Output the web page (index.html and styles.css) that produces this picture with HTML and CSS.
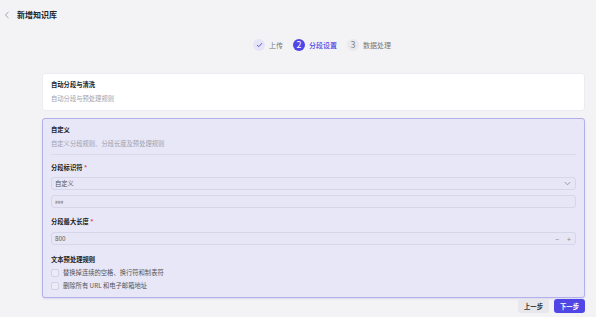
FILE: index.html
```html
<!DOCTYPE html>
<html lang="zh">
<head>
    <meta charset="UTF-8">
    <meta name="viewport" content="width=device-width, initial-scale=1.0">
    <title>新增知识库</title>
    <link rel="stylesheet" href="styles.css">
</head>
<body>
    <div class="header">
        <svg class="back" width="6" height="8" viewBox="0 0 6 8"><path d="M4.5 0.8 L1.5 4 L4.5 7.2" fill="none" stroke="#9a9aa6" stroke-width="0.9"/></svg>
        <span class="title">新增知识库</span>
    </div>

    <div class="steps">
        <div class="step done">
            <span class="dot"><svg width="7" height="6" viewBox="0 0 7 6"><path d="M1 3 L2.8 4.7 L6 1.2" fill="none" stroke="#5b55e0" stroke-width="1"/></svg></span>
            <span class="label">上传</span>
        </div>
        <div class="step active">
            <span class="dot">2</span>
            <span class="label">分段设置</span>
        </div>
        <div class="step">
            <span class="dot">3</span>
            <span class="label">数据处理</span>
        </div>
    </div>

    <div class="main">
        <div class="card">
            <div class="card-title">自动分段与清洗</div>
            <div class="card-desc">自动分段与预处理规则</div>
        </div>

        <div class="card selected">
            <div class="card-title">自定义</div>
            <div class="card-desc">自定义分段规则、分段长度及预处理规则</div>
            <hr class="divider">

            <div class="field-label">分段标识符 <span class="req">*</span></div>
            <div class="box">
                <span>自定义</span>
                <svg width="7" height="5" viewBox="0 0 7 5"><path d="M0.8 1 L3.5 3.8 L6.2 1" fill="none" stroke="#8a8a9a" stroke-width="0.8"/></svg>
            </div>
            <div class="box small">###</div>

            <div class="field-label gap">分段最大长度 <span class="req">*</span></div>
            <div class="box">
                <span>800</span>
                <span class="stepper"><span>−</span><span>+</span></span>
            </div>

            <div class="field-label gap2">文本预处理规则</div>
            <label class="check first"><span class="tick"></span>替换掉连续的空格、换行符和制表符</label>
            <label class="check"><span class="tick"></span>删除所有 URL 和电子邮箱地址</label>
        </div>

        <div class="actions">
            <button class="btn">上一步</button>
            <button class="btn primary">下一步</button>
        </div>
    </div>
</body>
</html>
```

FILE: styles.css
```css
body {
    margin: 0;
    background-color: #f3f3f6;
    font-family: "Noto Sans CJK SC", "Noto Sans", sans-serif;
    color: #333;
}

.header {
    display: flex;
    align-items: center;
    height: 29px;
    padding-left: 4px;
}

.back {
    margin-right: 7px;
}

.title {
    font-size: 8px;
    font-weight: bold;
    line-height: 10px;
    color: #222;
}

.steps {
    display: flex;
    align-items: center;
    margin-left: 253px;
    height: 31px;
}

.step {
    display: flex;
    align-items: center;
    margin-right: 10px;
}

.dot {
    width: 12px;
    height: 12px;
    border-radius: 50%;
    background: #e9e9ee;
    color: #888;
    font-size: 9px;
    line-height: 12px;
    display: flex;
    align-items: center;
    justify-content: center;
    margin-right: 4px;
}

.step.done .dot {
    background: #e6e5f7;
}

.step.active .dot {
    background: #4f46e5;
    color: #fff;
}

.label {
    font-size: 7px;
    color: #777;
}

.step.active .label {
    color: #4f46e5;
    font-weight: 500;
}

.main {
    margin: 13px 11px 0 42px;
}

.card {
    background: #fff;
    border: 1px solid #ebebf0;
    border-radius: 3px;
    padding: 7px 8px;
    height: 22px;
}

.card.selected {
    height: auto;
    margin-top: 7px;
    padding: 7px 8px 5px;
    background: #e7e7f8;
    border-color: #b3b0ea;
    box-shadow: 0 1px 2px rgba(80, 70, 200, 0.15);
}

.card-title {
    font-size: 6.3px;
    font-weight: bold;
    line-height: 8px;
    color: #222;
}

.card-desc {
    font-size: 6.3px;
    line-height: 8px;
    color: #a0a0ac;
    margin-top: 6px;
}

.divider {
    border: none;
    border-top: 1px solid #d9d9ec;
    margin: 6px 0 0;
}

.field-label {
    font-size: 6.3px;
    font-weight: bold;
    line-height: 8px;
    color: #222;
    margin-top: 9px;
    margin-bottom: 5px;
}

.field-label.gap {
    margin-top: 10px;
    margin-bottom: 6px;
}

.field-label.gap2 {
    margin-top: 11px;
    margin-bottom: 2px;
}

.req {
    color: #e5484d;
}

.box {
    box-sizing: border-box;
    height: 13px;
    border: 1px solid #d6d6ea;
    border-radius: 3px;
    background: #e6e6f7;
    display: flex;
    align-items: center;
    justify-content: space-between;
    padding: 0 4px 0 3px;
    font-size: 6.3px;
    color: #555;
    margin-bottom: 5px;
}

.box.small {
    font-size: 5px;
    margin-bottom: 0;
}

.stepper {
    display: flex;
    gap: 8px;
    color: #888;
    font-size: 7px;
}

.check {
    display: flex;
    align-items: center;
    height: 13px;
    font-size: 6.3px;
    color: #555;
}

.tick {
    width: 6px;
    height: 6px;
    border: 1px solid #d2d2e4;
    border-radius: 2px;
    background: #ececf8;
    margin-right: 4px;
}

.actions {
    display: flex;
    justify-content: flex-end;
    gap: 5px;
    margin-top: 1px;
}

.btn {
    height: 14px;
    width: 31px;
    padding: 0;
    border: none;
    border-radius: 3px;
    background: #e8e8ec;
    color: #333;
    font-family: inherit;
    font-size: 6.3px;
    font-weight: bold;
}

.btn.primary {
    background: #4f46e5;
    color: #fff;
}
```
